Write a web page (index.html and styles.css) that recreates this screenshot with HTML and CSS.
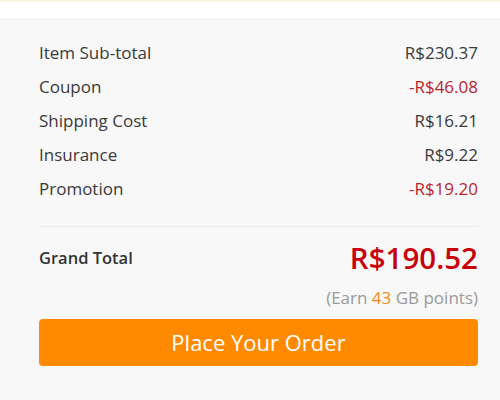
FILE: index.html
```html
<!DOCTYPE html>
<html>
<head>
<meta charset="utf-8">
<link rel="stylesheet" href="styles.css">
</head>
<body>
<div class="topbar"></div>
<div class="summary">
  <div class="rows">
    <div class="row"><span>Item Sub-total</span><span>R$230.37</span></div>
    <div class="row"><span>Coupon</span><span class="neg">-R$46.08</span></div>
    <div class="row"><span>Shipping Cost</span><span>R$16.21</span></div>
    <div class="row"><span>Insurance</span><span>R$9.22</span></div>
    <div class="row"><span>Promotion</span><span class="neg">-R$19.20</span></div>
  </div>
  <div class="divider"></div>
  <div class="grand"><span class="grand-label">Grand Total</span><span class="grand-value">R$190.52</span></div>
  <div class="earn">(Earn <span class="pts">43</span> GB points)</div>
  <button class="order">Place Your Order</button>
</div>
</body>
</html>
```
FILE: styles.css
```css
* { box-sizing: border-box; }
html, body { margin: 0; padding: 0; }
body {
  background: #f8f8f8;
  font-family: "Open Sans", "Liberation Sans", sans-serif;
  color: #333;
  width: 500px;
  height: 400px;
  overflow: hidden;
}
.topbar {
  height: 20px;
  background: #fff;
  border-top: 2px solid #fbf6de;
  border-bottom: 1px solid #ececec;
}
.summary {
  padding: 16px 22px 0 39px;
  display: flex;
  flex-direction: column;
}
.rows { display: flex; flex-direction: column; }
.row {
  display: flex;
  justify-content: space-between;
  font-size: 17px;
  line-height: 34px;
  height: 34px;
  color: #3a3a3a;
}
.neg { color: #b8252c; }
.divider {
  height: 1px;
  background: #ebebeb;
  margin-top: 20px;
  margin-bottom: 10px;
}
.grand {
  display: flex;
  justify-content: space-between;
  align-items: center;
  height: 40px;
}
.grand-label { font-size: 16.5px; font-weight: 600; color: #333; }
.grand-value { font-size: 29.5px; font-weight: 600; color: #c8000a; }
.earn {
  text-align: right;
  font-size: 17px;
  line-height: 20px;
  color: #9a9a9a;
  margin-top: 11px;
}
.pts { color: #f08a1c; }
.order {
  margin-top: 11px;
  height: 47px;
  border: none;
  border-radius: 4px;
  background: #ff8a00;
  color: #fff;
  font-family: "Open Sans", "Liberation Sans", sans-serif;
  font-size: 22px;
  line-height: 47px;
  padding: 0 0 0 0;
  width: 100%;
}
```
